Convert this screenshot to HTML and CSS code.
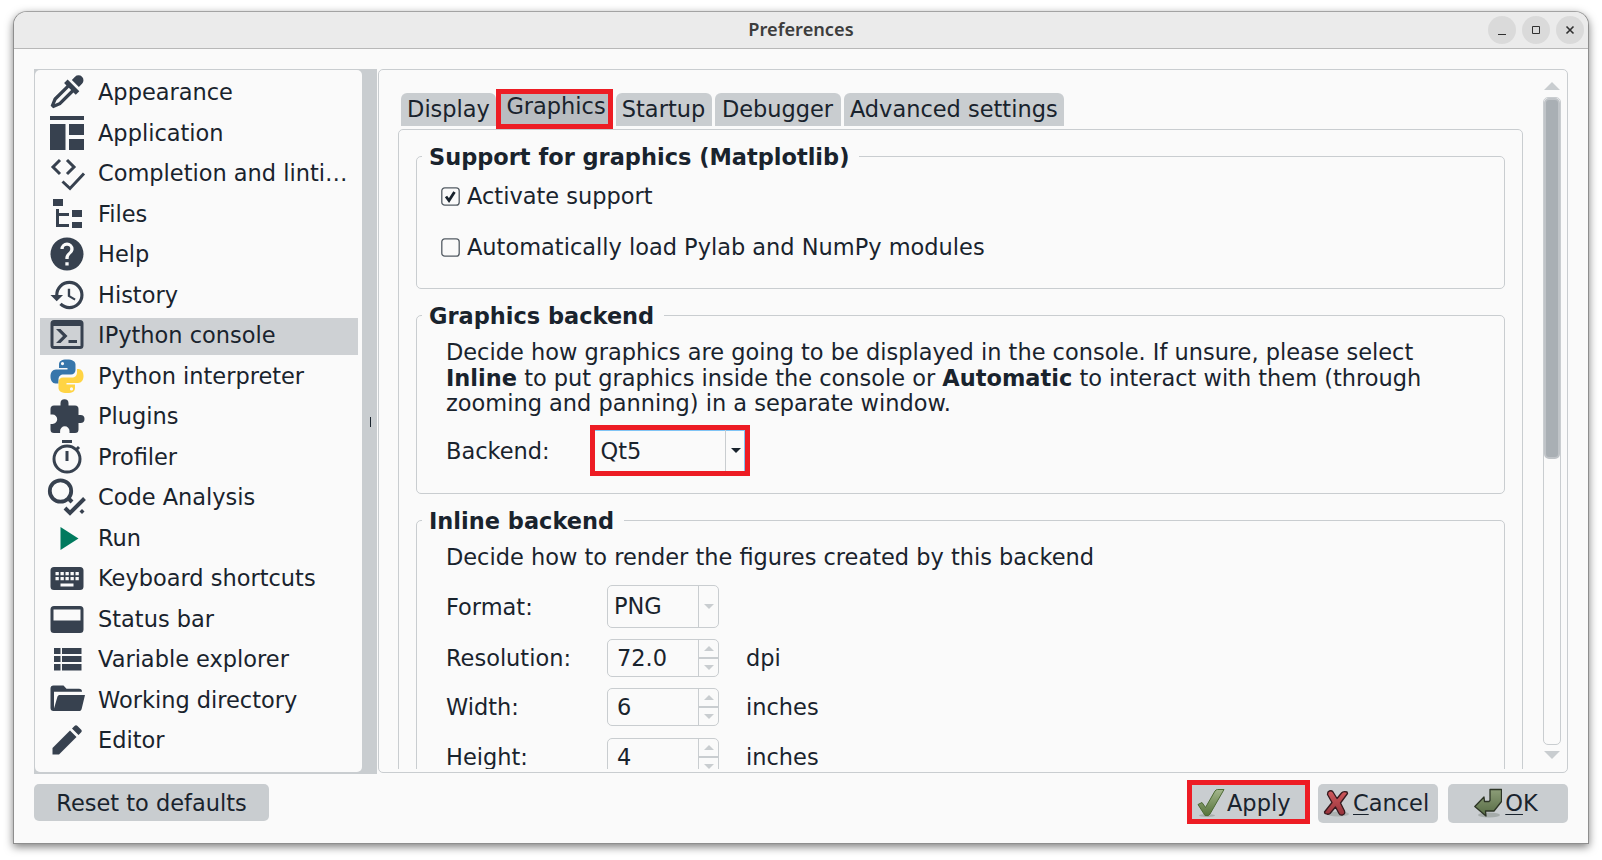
FILE: index.html
```html
<!DOCTYPE html>
<html lang="en">
<head>
<meta charset="utf-8">
<title>Preferences</title>
<link rel="stylesheet" href="styles.css">
</head>
<body>
<div class="window">
  <header class="titlebar">
    <span class="title">Preferences</span>
    <div class="controls">
      <span class="ctl"><svg viewBox="0 0 28 28"><path d="M10 18.5h8"/></svg></span>
      <span class="ctl"><svg viewBox="0 0 28 28"><path d="M10.500 10.500h7v7h-7z"/></svg></span>
      <span class="ctl"><svg viewBox="0 0 28 28"><path d="M10.500 10.500l7 7m0-7l-7 7" stroke-width="1.600"/></svg></span>
    </div>
  </header>
  <main class="body">
    <div class="split">
      <nav class="side">
        <ul class="list">
          <li><svg viewBox="1.6 1.9 20.6 20.6"><path d="M19.350 11.720l-2.130 2.130-1.410-1.420-7.710 7.710L3.500 22 2 20.500l1.860-4.600 7.710-7.710-1.420-1.410 2.130-2.130 7.070 7.070M16.760 3A3 3 0 0 1 21 3a3 3 0 0 1 0 4.240l-1.920 1.920-4.240-4.240L16.760 3M5.560 17.030L4.500 19.500l2.470-1.060L14.400 11 13 9.600l-7.440 7.430z"/></svg>Appearance</li>
          <li><svg viewBox="0 0 34 34"><path d="M0 0h34v4H0zM0 8h15.500v26H0zM19 8h15v11H19zM19 23h15v11H19z"/></svg>Application</li>
          <li><svg viewBox="0 0 34 34"><g class="ln" stroke-width="3"><path d="M10 4L3 11l7 7M17 4l7 7-7 7M12.500 25.500l7.500 7 14-15"/></g></svg>Completion and linti…</li>
          <li><svg viewBox="0 0 34 34"><path d="M3 2h10v7H3zM22 13h10v7H22zM22 25h10v6H22zM6 12h3v4h10v3H9v8h10v3H6z"/></svg>Files</li>
          <li><svg viewBox="1.7 1.7 20.6 20.6"><path d="M15.070 11.250l-.9.920C13.450 12.890 13 13.500 13 15h-2v-.5c0-1.110.45-2.110 1.170-2.830l1.240-1.260c.37-.36.59-.86.59-1.410a2 2 0 0 0-4 0H8a4 4 0 0 1 8 0c0 .88-.36 1.670-.93 2.250M13 19h-2v-2h2M12 2a10 10 0 1 0 0 20 10 10 0 0 0 0-20z"/></svg>Help</li>
          <li><svg viewBox="0.7 1.2 21.6 21.6"><path d="M13.500 8H12v5l4.280 2.540.72-1.210-3.500-2.080V8M13 3a9 9 0 0 0-9 9H1l3.960 4.030L9 12H6a7 7 0 0 1 7-7 7 7 0 0 1 7 7 7 7 0 0 1-7 7c-1.930 0-3.680-.79-4.940-2.060l-1.420 1.420A8.896 8.896 0 0 0 13 21a9 9 0 0 0 0-18"/></svg>History</li>
          <li class="on"><svg viewBox="0 0 34 34"><path fill-rule="evenodd" d="M4 2h26a3.500 3.500 0 0 1 3.500 3.500v22A3.500 3.500 0 0 1 30 31H4a3.500 3.500 0 0 1-3.500-3.500v-22A3.500 3.500 0 0 1 4 2zM3.500 8v20h27V8zM6 11h4.500l7 7-7 7H6l7-7zM18.500 22h8.500v3h-8.500z"/></svg>IPython console</li>
          <li><svg viewBox="0 0 34 34"><path fill="#3776ab" d="M17 .5c-6 0-8 2-8 5V9h8.500v1.500H6c-3.500 0-5.500 3-5.500 7s2 7 5 7h3v-4c0-3 2-5 5-5H21c2.500 0 4.500-2 4.500-4.500V5.500c0-3-3-5-8.500-5zM12.500 3a1.600 1.600 0 1 1 0 3.200 1.600 1.600 0 0 1 0-3.200z"/><path fill="#ffd444" d="M17 34c6 0 8-2 8-5v-3.500h-8.500V24H28c3.500 0 5.500-3 5.500-7s-2-7-5-7h-1.500v3.500c0 3-2 5-5 5H13c-2.500 0-4.500 2-4.500 4.500V29c0 3 3 5 8.500 5zM21.500 28.300a1.600 1.600 0 1 1 0 3.200 1.600 1.600 0 0 1 0-3.200z"/></svg>Python interpreter</li>
          <li><svg viewBox="0 0 34 34"><path d="M4 6.500h6.500V4.200a4 4 0 0 1 8 0v2.300H25A3.500 3.500 0 0 1 28.500 10v6h2a4 4 0 0 1 0 8h-2v6.500A3.500 3.500 0 0 1 25 34h-5.500v-2a4.700 4.700 0 0 0-9.400 0v2H4a3.500 3.500 0 0 1-3.500-3.500V25h2a4.700 4.700 0 0 0 0-9.400h-2V10A3.500 3.500 0 0 1 4 6.500z"/></svg>Plugins</li>
          <li><svg viewBox="0 0 34 34"><path d="M12 0h10v3H12zM15.500 11h3v10h-3z"/><g class="ln" stroke-width="3"><circle cx="17" cy="19" r="13"/><path d="M26 10l3-3"/></g></svg>Profiler</li>
          <li><svg viewBox="0 0 34 34"><g class="ln" stroke-width="3.800"><circle cx="10.500" cy="11" r="10.700"/><path d="M18 18l4 4" stroke-width="4"/></g><path class="ln" stroke-width="4" d="M15 28l5 5 14.500-14.500"/><path d="M32 29l2.500 2.500L32 34l-2.500-2.500z"/></svg>Code Analysis</li>
          <li><svg viewBox="0 0 34 34"><path fill="#007a5e" d="M10.500 6l18 11.500-18 11.500z"/></svg>Run</li>
          <li><svg viewBox="0 0 34 34"><path fill-rule="evenodd" d="M4 6h26a3.500 3.500 0 0 1 3.500 3.500v16A3.500 3.500 0 0 1 30 29H4a3.500 3.500 0 0 1-3.500-3.500v-16A3.500 3.500 0 0 1 4 6zM5.500 11v3.300h3.300v-3.300zm5 0v3.300h3.300v-3.300zm5 0v3.300h3.300v-3.300zm5 0v3.300h3.300v-3.300zm5 0v3.300h3.300v-3.300zm-20 5v3.300h3.300v-3.300zm5 0v3.300h3.300v-3.300zm5 0v3.300h3.300v-3.300zm5 0v3.300h3.300v-3.300zm5 0v3.300h3.300v-3.300zm-15 6.500v3h13v-3z"/></svg>Keyboard shortcuts</li>
          <li><svg viewBox="0 0 34 34"><path fill-rule="evenodd" d="M4 4h26a3.500 3.500 0 0 1 3.500 3.500v20A3.500 3.500 0 0 1 30 31H4a3.500 3.500 0 0 1-3.500-3.500v-20A3.500 3.500 0 0 1 4 4zM3.500 7.500v11h27v-11z"/></svg>Status bar</li>
          <li><svg viewBox="0 0 34 34"><path d="M4 6h6.500v6H4zM12 6h19.500v6H12zM4 14h6.500v6H4zM12 14h19.500v6H12zM4 22h6.500v6.500H4zM12 22h19.500v6.500H12z"/></svg>Variable explorer</li>
          <li><svg viewBox="0 0 34 34"><path d="M35 12H9.500a2 2 0 0 0-2 1.500L4 25.500V8.800h28a3 3 0 0 0-3-3H16.500L13.500 2.500h-10a3 3 0 0 0-3 3V25a3 3 0 0 0 3 3H29c1.500 0 2.300-.8 2.700-2.300z"/></svg>Working directory</li>
          <li><svg viewBox="0 0 34 34"><path d="M2.500 25v6.500H9L26.500 14 20 7.500zM28.500 12l2.500-2.500c1-1 1-2 0-3L27.500 3c-1-1-2-1-3 0L22 5.500z"/></svg>Editor</li>
        </ul>
      </nav>
      <div class="handle"><i></i></div>
      <section class="page">
        <div class="content">
          <div class="tabs">
            <span class="tab t1">Display</span>
            <span class="tab sel">Graphics</span>
            <span class="tab t3">Startup</span>
            <span class="tab t4">Debugger</span>
            <span class="tab t5">Advanced settings</span>
          </div>
          <div class="pane">
            <section class="group g1">
              <h2><span>Support for graphics (Matplotlib)</span></h2>
              <label class="check"><svg viewBox="0 0 19 19"><rect x=".8" y=".8" width="17.400" height="17.400" rx="3"/><path d="M5 9.500l3 4L13.500 5"/></svg>Activate support</label>
              <label class="check"><svg viewBox="0 0 19 19"><rect x=".8" y=".8" width="17.400" height="17.400" rx="3"/></svg>Automatically load Pylab and NumPy modules</label>
            </section>
            <section class="group g2">
              <h2><span>Graphics backend</span></h2>
              <p class="desc">Decide how graphics are going to be displayed in the console. If unsure, please select<br><b>Inline</b> to put graphics inside the console or <b>Automatic</b> to interact with them (through<br>zooming and panning) in a separate window.</p>
              <div class="row backend"><span class="lab">Backend:</span>
                <div class="marked"><span class="val">Qt5</span><span class="arrow"><svg class="down" viewBox="0 0 10 5"><path d="M0 0h10L5 5z"/></svg></span></div>
              </div>
            </section>
            <section class="group g3">
              <h2><span>Inline backend</span></h2>
              <p class="desc">Decide how to render the figures created by this backend</p>
              <div class="row format"><span class="lab">Format:</span><div class="combo"><span class="val">PNG</span><span class="arrow"><svg class="down" viewBox="0 0 10 5"><path d="M0 0h10L5 5z"/></svg></span></div></div>
              <div class="row res"><span class="lab">Resolution:</span><div class="spin"><span class="val">72.0</span><span class="steps"><i><svg viewBox="0 0 10 5"><path d="M0 5h10L5 0z"/></svg></i><i><svg viewBox="0 0 10 5"><path d="M0 0h10L5 5z"/></svg></i></span></div><span class="unit">dpi</span></div>
              <div class="row wid"><span class="lab">Width:</span><div class="spin"><span class="val">6</span><span class="steps"><i><svg viewBox="0 0 10 5"><path d="M0 5h10L5 0z"/></svg></i><i><svg viewBox="0 0 10 5"><path d="M0 0h10L5 5z"/></svg></i></span></div><span class="unit">inches</span></div>
              <div class="row hei"><span class="lab">Height:</span><div class="spin"><span class="val">4</span><span class="steps"><i><svg viewBox="0 0 10 5"><path d="M0 5h10L5 0z"/></svg></i><i><svg viewBox="0 0 10 5"><path d="M0 0h10L5 5z"/></svg></i></span></div><span class="unit">inches</span></div>
            </section>
          </div>
        </div>
        <div class="scroll">
          <svg viewBox="0 0 16 8"><path d="M0 8h16L8 0z"/></svg>
          <div class="track"><div class="thumb"></div></div>
          <svg viewBox="0 0 16 8"><path d="M0 0h16L8 8z"/></svg>
        </div>
      </section>
    </div>
    <footer class="foot">
      <button class="btn reset">Reset to defaults</button>
      <button class="btn apply"><svg viewBox="0 0 28 30"><defs><linearGradient id="gr" x1="0" y1="0" x2="0" y2="1"><stop offset="0" stop-color="#a3b68c"/><stop offset="1" stop-color="#56733a"/></linearGradient><linearGradient id="dk" x1="0" y1="0" x2="0" y2="1"><stop offset="0" stop-color="#8c9d78"/><stop offset="1" stop-color="#566b43"/></linearGradient><linearGradient id="rd" x1="0" y1="0" x2="0" y2="1"><stop offset="0" stop-color="#d0585c"/><stop offset="1" stop-color="#96333b"/></linearGradient></defs><ellipse cx="10" cy="27.500" rx="8" ry="1.500" fill="#8f9692" opacity=".6"/><path fill="url(#gr)" stroke="#4c6a34" stroke-width="1" d="M1 16.500l4-2 3.500 5L18 3q1-1.500 2.500-1.500H27L13 26q-1 2.500-5 1.500z"/></svg>Apply</button>
      <button class="btn cancel"><svg viewBox="0 0 28 30"><ellipse cx="15" cy="26" rx="11" ry="2.500" fill="#8f9692" opacity=".5"/><path fill="url(#rd)" stroke="#35191e" stroke-width="1.300" stroke-linejoin="round" d="M5 4q3-2.500 5 0l4 6.500L18.500 5Q20 3 24 4l.5 1.500L17.500 15l4 8q1 3-2 4-2.500.5-3.500-1.500L12.500 19 7 25.500q-2 1.500-5 0L1.500 24 9 14.500 4.500 6.500z"/></svg><span><u>C</u>ancel</span></button>
      <button class="btn ok"><svg viewBox="0 0 28 30"><ellipse cx="15" cy="27" rx="11" ry="2.500" fill="#8f9692" opacity=".6"/><path fill="url(#dk)" stroke="#2d3526" stroke-width="1.300" stroke-linejoin="round" d="M16 1.500h11.500v12L20 23h-8.500l.5 5L.8 18.500 10 9l.5 4.500H15l1-1z"/></svg><span><u>O</u>K</span></button>
    </footer>
  </main>
</div>
</body>
</html>
```
FILE: styles.css
```css
* { box-sizing: border-box; }
body { margin: 0; padding: 11px 13px 16px; height: 860px; background: #fff; overflow: hidden;
  font: 22.48px/26px "DejaVu Sans", sans-serif; color: #19232d; }
svg { display: block; flex: none; }
.window { width: 1576px; height: 833px; border: 1px solid #8e8e8e; border-top-color: #a3a3a3; border-radius: 14px 14px 0 0;
  background: #fafafa; box-shadow: 0 3px 9px rgba(0,0,0,.5); display: flex; flex-direction: column; overflow: hidden; }
.titlebar { height: 37px; flex: none; background: #ebebeb; border-bottom: 1px solid #b8b8b8; position: relative; display: flex;
  align-items: center; justify-content: center; }
.title { font: 600 18.2px/34px "Noto Sans", sans-serif; color: #3d3d3d; padding-bottom: 2px; }
.controls { position: absolute; right: 4px; top: 4px; display: flex; gap: 6px; }
.ctl { width: 28px; height: 28px; border-radius: 50%; background: #dadada; }
.ctl svg { width: 28px; height: 28px; fill: none; stroke: #303030; stroke-width: 1; }
.body { padding: 20px 20px 0 20px; display: flex; flex-direction: column; }
.split { display: flex; height: 705px; }
.side { width: 328px; height: 705px; background: #c9cdd0; padding: 1px 0 2px 1px; }
.list { list-style: none; margin: 0; padding: 2px 4px 0 5px; height: 702px; border-radius: 5px; background: #fafafa; }
.list li { display: flex; align-items: center; height: 40.5px; padding-left: 9.5px; gap: 14.5px; white-space: nowrap; }
.list li svg { width: 34px; height: 34px; fill: #37414f; overflow: visible; }
.list li.on { background: linear-gradient(#ced1d4,#ced1d4) 0 3px / 100% 37px no-repeat; }
.ln { fill: none; stroke: #37414f; }
.handle { width: 15px; height: 705px; background: #c9cdd0; padding-left: 2px; display: flex; align-items: center; justify-content: center; }
.handle i { width: 1px; height: 10px; background: #19232d; }
.page { margin-left: 1px; width: 1190px; height: 704px; border: 1px solid #c9cdd0; border-radius: 5px; display: flex; justify-content: space-between; }
.content { height: 699px; width: 1150px; padding: 22px 0 0 19px; overflow: hidden; }
.tabs { display: flex; align-items: flex-start; height: 37px; }
.tab { height: 33px; margin: 1px 3px 0 0; border-radius: 6px 6px 0 0; background: #c9cdd0; text-align: center; line-height: 33px; }
.t1 { width: 95px; margin: 1px 0 0 3px; }
.sel { width: 117px; height: 40px; margin: -3px 2.5px 0 0; border: 5px solid #ed1c24; border-radius: 0; background: #b9bdc1; line-height: 24px; padding-left: 3px; }
.t3 { width: 96px; }
.t4 { width: 126px; }
.t5 { width: 220.5px; }
.pane { width: 1125px; height: 760px; border: 1px solid #c9cdd0; border-radius: 5px; padding: 16px 16px 0 17px; }
.group { position: relative; border: 1px solid #c9cdd0; border-radius: 5px; width: 1089px; }
.group h2 { margin: 0; font-size: 22.48px; line-height: 26px; position: absolute; left: 5px; top: -13px; background: #fafafa; padding: 0 10px 0 7px; white-space: nowrap; }
.g1 { margin-top: 10px; height: 133px; padding: 26px 0 0 24px; }
.check { display: flex; align-items: center; gap: 7px; height: 26px; margin-bottom: 25px; }
.check svg { width: 19px; height: 19px; fill: none; stroke: #535b63; stroke-width: 1.300; }
.check path { stroke: #19232d; stroke-width: 2.800; }
.g2 { margin-top: 26px; height: 179px; padding: 24px 0 0 29px; }
.desc { margin: 0; line-height: 25.5px; white-space: nowrap; }
.row { display: flex; align-items: center; }
.lab { width: 161px; }
.backend { height: 51px; margin-top: 8.5px; }
.backend .lab { width: 144px; }
.marked { width: 160px; height: 51px; border: 5px solid #ed1c24; display: flex; box-shadow: inset 0 1px #7fc4f5, inset -1px 0 #7fc4f5; padding-left: 5.5px; }
.val { flex: 1; align-self: center; }
.arrow { border-left: 1px solid #c9cdd0; width: 20px; display: flex; align-items: center; justify-content: center; }
.arrow svg, .steps svg { width: 10px; height: 5px; fill: #c9cdd0; }
.marked .arrow svg { fill: #19232d; }
.g3 { margin-top: 26px; height: 400px; padding: 24px 0 0 29px; }
.combo, .spin { width: 112px; height: 43px; border: 1px solid #c9cdd0; border-radius: 5px; padding-left: 6px; display: flex; }
.combo .val { padding-bottom: 1px; }
.spin { height: 38px; padding-left: 9px; }
.format { margin-top: 14.5px; }
.res { margin-top: 11px; }
.wid { margin-top: 11px; }
.hei { margin-top: 12px; }
.steps { border-left: 1px solid #c9cdd0; width: 20px; display: flex; flex-direction: column; }
.steps i { flex: 1; display: flex; align-items: center; justify-content: center; }
.steps i + i { border-top: 2px solid #c9cdd0; }
.unit { margin-left: 27px; }
.scroll { width: 18px; margin: 12px 6.5px 13px 0; display: flex; flex-direction: column; align-items: center; justify-content: space-between; }
.scroll svg { width: 16px; height: 8px; fill: #c9cdd0; }
.track { width: 18px; height: 648px; border: 1px solid #c9cdd0; border-radius: 5px; }
.thumb { width: 16px; height: 361px; background: #a9afb4; border: 2px solid #c0c4c8; border-radius: 5px; }
.foot { margin-top: 8px; display: flex; }
.btn { border: 0; height: 39px; margin-top: 2px; padding: 0; border-radius: 5px; background: #c9cdd0; color: inherit; font: inherit; display: flex; align-items: center; justify-content: center; gap: 3px; }
.btn svg { width: 28px; height: 30px; }
.btn u { text-decoration-thickness: 1px; text-underline-offset: 3px; }
.reset { width: 235px; height: 37px; margin-top: 2px; }
.apply { width: 123px; height: 44px; margin: -2px 8px 0 auto; border: 5px solid #ed1c24; border-radius: 0; justify-content: flex-start; padding: 1px 0 0 5px; gap: 2px; }
.cancel { width: 120px; margin-right: 10px; justify-content: flex-start; padding: 0 0 1px 5px; gap: 2px; }
.ok { width: 120px; padding: 0 4px 1px 0; }
```
